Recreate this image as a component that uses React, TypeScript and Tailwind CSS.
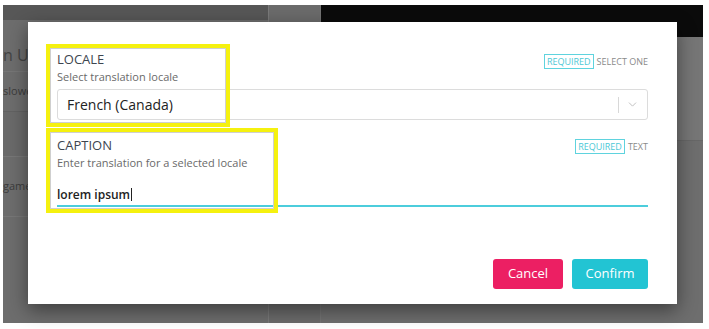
import { ChevronDown } from "lucide-react";

function Badge({ kind }: { kind: string }) {
  return (
    <div className="flex items-center gap-[3px] text-[9px] leading-none">
      <span className="border border-[#5fd3de] px-[2px] py-[2px] text-[#4cc8d6]">REQUIRED</span>
      <span className="text-[#8a8a8a]">{kind}</span>
    </div>
  );
}

export default function App() {
  return (
    <div
      className="relative h-[329px] w-[709px] overflow-hidden bg-white"
      style={{ fontFamily: "'Open Sans', Lato, sans-serif" }}
    >
      {/* faded app behind the dialog */}
      <div className="ml-[3px] mt-[5px] flex h-[318px] w-[700px] bg-[#6d6d6d]">
        <div className="flex w-[266px] flex-col border-r border-[#7a7a7a] text-[13px] text-[#3c3c3c]">
          <div className="h-[15px] bg-[#575757]" />
          <div className="flex h-[52px] items-end border-b border-[#767676] pb-[4px] text-[16px] text-[#444]">
            <span>n Ur</span>
          </div>
          <div className="flex h-[40px] items-center border-b border-[#626262] text-[11px]">
            <span>slowe</span>
          </div>
          <div className="h-[45px] border-b border-[#777] bg-[#6a6a6a]" />
          <div className="flex h-[60px] items-center border-b border-[#777] text-[11px]">
            <span>game</span>
          </div>
          <div className="flex-1" />
        </div>
        <div className="w-[52px] border-r border-[#747474] bg-[#6b6b6b]" />
        <div className="flex flex-1 flex-col">
          <div className="h-[32px] bg-[#0b0b0b]" />
          <div className="h-[104px] border-b border-[#676767] bg-[#767676]" />
          <div className="flex-1 bg-[#6e6e6e]" />
        </div>
      </div>

      {/* dialog */}
      <div className="absolute left-[28px] top-[22px] h-[282px] w-[649px] bg-white shadow-[0_6px_18px_rgba(0,0,0,0.45)]">
        <div className="relative flex flex-col px-[29px] pt-[22px]">
          {/* highlight boxes */}
          <div className="pointer-events-none absolute left-[18px] top-[22px] h-[83px] w-[184px] border-[4px] border-[#f5f10f] shadow-[inset_0_0_0_1px_#cfcfcf]" />
          <div className="pointer-events-none absolute left-[18px] top-[106px] h-[85px] w-[232px] border-[4px] border-[#f5f10f] shadow-[inset_0_0_0_1px_#cfcfcf]" />

          <div className="flex items-start justify-between pt-[8px]">
            <div className="flex flex-col">
              <span className="text-[13px] leading-[15px] text-[#3d4650]">LOCALE</span>
              <span className="mt-[3px] text-[11px] leading-[13px] text-[#6a6a6a]">Select translation locale</span>
            </div>
            <div className="mt-[2px]">
              <Badge kind="SELECT ONE" />
            </div>
          </div>

          <div className="mt-[6px] flex h-[31px] items-center rounded-[3px] border border-[#dcdcdc] pl-[9px] pr-[8px]">
            <span className="flex-1 text-[14px] text-[#222]">French (Canada)</span>
            <span className="h-[16px] w-px bg-[#d8d8d8]" />
            <ChevronDown className="ml-[7px] size-[13px] text-[#b8b8b8]" strokeWidth={1.6} />
          </div>

          <div className="mt-[18px] flex items-start justify-between">
            <div className="flex flex-col">
              <span className="text-[13px] leading-[15px] text-[#3d4650]">CAPTION</span>
              <span className="mt-[3px] text-[11px] leading-[13px] text-[#6a6a6a]">
                Enter translation for a selected locale
              </span>
            </div>
            <div className="mt-[1px]">
              <Badge kind="TEXT" />
            </div>
          </div>

          <div className="mt-[15px] flex h-[23px] items-center border-b-[2px] border-[#4ccddc]">
            <span className="text-[12px] font-semibold text-[#222]">lorem ipsum</span>
            <span className="ml-px h-[13px] w-px bg-[#222]" />
          </div>

          <div className="mt-[52px] flex justify-end gap-[9px]">
            <button className="h-[30px] w-[70px] rounded-[3px] bg-[#ec1f63] text-[13px] text-white">Cancel</button>
            <button className="h-[30px] w-[76px] rounded-[3px] bg-[#22c4d3] text-[13px] text-white">Confirm</button>
          </div>
        </div>
      </div>
    </div>
  );
}
